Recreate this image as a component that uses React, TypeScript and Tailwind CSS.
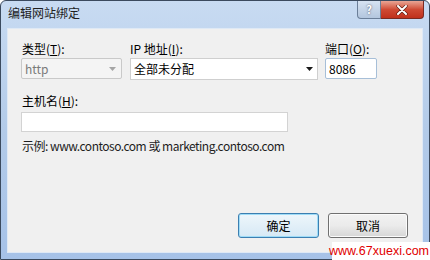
import React from "react";

const font = { fontFamily: '"Noto Sans CJK SC", "Liberation Sans", sans-serif' };

function Arrow({ color }: { color: string }) {
  return (
    <svg width="7" height="4" viewBox="0 0 7 4">
      <path d="M0 0H7L3.5 4Z" fill={color} />
    </svg>
  );
}

export default function App() {
  return (
    <div
      className="relative w-[430px] h-[260px] overflow-hidden text-[12px] text-black"
      style={font}
    >
      <div className="w-full h-full flex flex-col rounded-t-[6px] border border-[#3b4a5e] bg-gradient-to-b from-[#c8dbf2] via-[#b3cbe9] to-[#a6c2e8]">
        {/* title bar */}
        <div className="h-[27px] flex items-start">
          <div className="pl-[7px] pt-[4px] text-[12px] text-[#1e1e1e] leading-[16px]">编辑网站绑定</div>
          <div className="ml-auto flex mr-[5px]">
            <div className="w-[24px] h-[18px] flex items-center justify-center rounded-bl-[4px] border border-t-0 border-[#6b7f99] bg-gradient-to-b from-[#d7e3f2] to-[#b3c6de] text-[11px] font-bold text-white leading-none [text-shadow:0_0_2px_#445]">
              ?
            </div>
            <div className="w-[43px] h-[18px] flex items-center justify-center rounded-br-[4px] border border-t-0 border-l-0 border-[#7a2a22] bg-gradient-to-b from-[#e8a595] via-[#cf4a34] to-[#c0301c]">
              <svg width="12" height="10" viewBox="0 0 12 10">
                <path d="M2 1L10 9M10 1L2 9" stroke="#5a1a10" strokeWidth="3.2" strokeLinecap="round" />
                <path d="M2 1L10 9M10 1L2 9" stroke="#ffffff" strokeWidth="2" strokeLinecap="round" />
              </svg>
            </div>
          </div>
        </div>
        {/* client */}
        <div className="mx-[6px] h-[225px] border border-[#dfe9f5] bg-[#f0f0f0] flex flex-col pl-[13px] pt-[12px]">
          <div className="flex">
            <div className="flex flex-col w-[109px]">
              <div className="h-[16px] leading-[16px] pl-[1px]">类型(<u>T</u>):</div>
              <div className="mt-[1px] w-[101px] h-[21px] border border-[#c9c9c9] bg-[#f4f4f4] flex items-center pl-[3px] pr-[5px] text-[#7a7a7a] rounded-[2px]">
                <span>http</span>
                <span className="ml-auto"><Arrow color="#a5a5a5" /></span>
              </div>
            </div>
            <div className="flex flex-col w-[195px]">
              <div className="h-[16px] leading-[16px]">IP 地址(<u>I</u>):</div>
              <div className="mt-[1px] w-[188px] h-[22px] border border-[#cfcfcf] bg-white flex items-center pl-[3px] pr-[4px]">
                <span>全部未分配</span>
                <span className="ml-auto"><Arrow color="#1a1a1a" /></span>
              </div>
            </div>
            <div className="flex flex-col">
              <div className="h-[16px] leading-[16px]">端口(<u>O</u>):</div>
              <div className="mt-[1px] w-[52px] h-[21px] border border-[#a7bfd8] bg-white flex items-center pl-[3px] rounded-[2px]">
                8086
              </div>
            </div>
          </div>
          <div className="mt-[13px] h-[16px] leading-[16px] pl-[1px]">主机名(<u>H</u>):</div>
          <div className="mt-[3px] w-[267px] h-[20px] border border-[#d3d3d3] bg-white"></div>
          <div className="mt-[6px] h-[16px] leading-[16px] pl-[1px] text-[#1e1e1e] tracking-[-0.5px]">
            示例: www.contoso.com 或 marketing.contoso.com
          </div>
          <div className="mt-auto mb-[14px] flex justify-end pr-[14px] gap-[9px]">
            <div className="w-[81px] h-[25px] rounded-[3px] border border-[#3c7fb1] shadow-[inset_0_0_0_1px_#9fdcf7] bg-gradient-to-b from-[#eef6fb] to-[#d6e9f5] flex items-center justify-center">
              确定
            </div>
            <div className="w-[80px] h-[25px] rounded-[3px] border border-[#707070] shadow-[inset_0_0_0_1px_#fbfbfb] bg-gradient-to-b from-[#f2f2f2] via-[#ebebeb] to-[#d6d6d6] flex items-center justify-center">
              取消
            </div>
          </div>
        </div>
      </div>
      <div
        className="absolute right-0 bottom-0 w-[98px] h-[18px] bg-white flex items-center justify-end pr-[1px] text-[12.5px] text-[#e10000] leading-[14px] whitespace-nowrap"
        style={{ fontFamily: '"Liberation Sans", sans-serif' }}
      >
        <span>www.67xuexi.com</span>
      </div>
    </div>
  );
}
